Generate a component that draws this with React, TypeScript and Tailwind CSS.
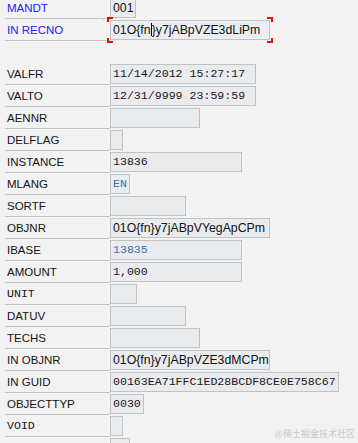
import React from "react";

type Row = {
  label: string;
  labelMono?: boolean;
  labelBlue?: boolean;
  box: string;
  value?: string;
  mono?: boolean;
  blueValue?: boolean;
  focused?: boolean;
};

const rows: Row[] = [
  { label: "MANDT", labelBlue: true, box: "w-[26px]", value: "001" },
  { label: "IN RECNO", labelBlue: true, box: "w-[160px]", value: "01O{fn}y7jABpVZE3dLiPm", focused: true },
  { label: "", box: "" },
  { label: "VALFR", box: "w-[146px]", value: "11/14/2012 15:27:17", mono: true },
  { label: "VALTO", box: "w-[146px]", value: "12/31/9999 23:59:59", mono: true },
  { label: "AENNR", box: "w-[90px]" },
  { label: "DELFLAG", box: "w-[13px]" },
  { label: "INSTANCE", box: "w-[132px]", value: "13836", mono: true },
  { label: "MLANG", box: "w-[20px]", value: "EN", mono: true, blueValue: true },
  { label: "SORTF", box: "w-[76px]" },
  { label: "OBJNR", box: "w-[160px]", value: "01O{fn}y7jABpVYegApCPm" },
  { label: "IBASE", box: "w-[132px]", value: "13835", mono: true, blueValue: true },
  { label: "AMOUNT", box: "w-[132px]", value: "1,000", mono: true },
  { label: "UNIT", labelMono: true, box: "w-[27px]" },
  { label: "DATUV", box: "w-[76px]" },
  { label: "TECHS", box: "w-[90px]" },
  { label: "IN OBJNR", box: "w-[160px]", value: "01O{fn}y7jABpVZE3dMCPm" },
  { label: "IN GUID", box: "w-[229px]", value: "00163EA71FFC1ED28BCDF8CE0E758C67", mono: true },
  { label: "OBJECTTYP", box: "w-[34px]", value: "0030", mono: true },
  { label: "VOID", labelMono: true, box: "w-[13px]" },
  { label: "", box: "w-[20px]", labelMono: true },
];

const sans = "font-['Liberation_Sans',Arial,sans-serif]";
const mono = "font-['Liberation_Mono','Courier_New',monospace]";

function Corner({ pos }: { pos: string }) {
  return <span className={`absolute w-[6px] h-[5px] border-[#e01010] ${pos}`} />;
}

function FieldValue({ row }: { row: Row }) {
  if (!row.value) return null;
  const color = row.blueValue ? "text-[#3a6db3]" : row.mono ? "text-[#1c1424]" : "text-[#111]";
  const font = row.mono ? `${mono} text-[11.6px]` : `${sans} text-[12.3px]`;
  if (row.focused) {
    return (
      <span className={`${font} ${color} whitespace-nowrap`}>
        01O{"{"}fn
        <span className="inline-block w-[2px] h-[13px] border-l border-black align-[-2px] -mr-[1px]" />
        {"}"}y7jABpVZE3dLiPm
      </span>
    );
  }
  return <span className={`${font} ${color} whitespace-nowrap`}>{row.value}</span>;
}

export default function App() {
  return (
    <div className="relative w-[358px] h-[443px] overflow-hidden bg-[#f2f2f2]">
      <div className="-mt-[3px] flex flex-col pl-[5px]">
        {rows.map((row, i) => {
          if (!row.label && !row.box) return <div key={i} className="h-[22px]" />;
          const labelColor = row.labelBlue ? "text-[#2222f4]" : "text-[#141414]";
          const labelFont = row.labelMono ? `${mono} text-[11.6px]` : `${sans} text-[11.5px]`;
          return (
            <div key={i} className="flex h-[22px] items-start">
              <div
                className={`w-[105px] h-[22px] border-b border-[#c4c4c4] pl-[2px] pt-[4px] leading-[14px] ${labelFont} ${labelColor}`}
              >
                {row.label}
              </div>
              <div className={`relative mt-[1px] h-[20px] ${row.box}`}>
                <div
                  className={`flex h-full items-center overflow-hidden border border-[#c2c2c2] bg-[#e9ecef] pl-[2px] ${
                    row.focused ? "bg-[#eaeef2]" : ""
                  }`}
                >
                  <FieldValue row={row} />
                </div>
                {row.focused && (
                  <>
                    <Corner pos="-left-[3px] -top-[3px] border-l-2 border-t-2" />
                    <Corner pos="-right-[3px] -top-[3px] border-r-2 border-t-2" />
                    <Corner pos="-left-[3px] -bottom-[3px] border-l-2 border-b-2" />
                    <Corner pos="-right-[3px] -bottom-[3px] border-r-2 border-b-2" />
                  </>
                )}
              </div>
            </div>
          );
        })}
      </div>
      <div className="absolute right-[3px] bottom-[4px] text-[9px] leading-[10px] text-[#c9c9c9] font-['Noto_Sans_CJK_SC',sans-serif]">
        @稀土掘金技术社区
      </div>
    </div>
  );
}
